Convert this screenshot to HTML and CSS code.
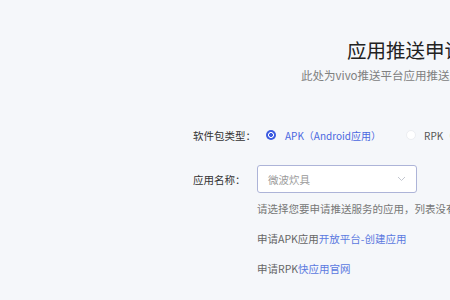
FILE: index.html
```html
<!DOCTYPE html>
<html lang="zh">
<head>
<meta charset="utf-8">
<link rel="stylesheet" href="styles.css">
</head>
<body>
<div class="page">
  <h1 class="title">应用推送申请</h1>
  <p class="subtitle">此处为vivo推送平台应用推送服务申请页面</p>
  <div class="form">
    <div class="row row-type">
      <span class="label">软件包类型：</span>
      <label class="radio checked"><span class="dot"></span><span class="rtext">APK（Android应用）</span></label>
      <label class="radio"><span class="dot"></span><span class="rtext">RPK（快应用）</span></label>
    </div>
    <div class="row row-name">
      <span class="label">应用名称：</span>
      <div class="select">
        <span class="value">微波炊具</span>
        <svg class="chev" width="9" height="6" viewBox="0 0 9 6"><path d="M1 1l3.5 3.5L8 1" fill="none" stroke="#c3c7d0" stroke-width="1"/></svg>
      </div>
    </div>
    <div class="field">
      <p class="help">请选择您要申请推送服务的应用，列表没有您的应用？</p>
      <p class="link-line">申请APK应用<a class="link">开放平台-创建应用</a></p>
      <p class="link-line">申请RPK<a class="link">快应用官网</a></p>
    </div>
  </div>
</div>
</body>
</html>
```
FILE: styles.css
```css
html, body {
  margin: 0;
  padding: 0;
  background: #f5f7fa;
  overflow: hidden;
  width: 450px;
  height: 300px;
}
body {
  font-family: "Noto Sans CJK SC", "Noto Sans", sans-serif;
  color: #333;
}
.page {
  padding-top: 38px;
  white-space: nowrap;
}
.title {
  margin: 0 0 0 347px;
  font-size: 19.5px;
  line-height: 24px;
  font-weight: 400;
  color: #222;
}
.subtitle {
  margin: 6px 0 0 301px;
  font-size: 11.5px;
  line-height: 14px;
  color: #808080;
}
.form {
  margin: 43px 0 0 193px;
}
.row {
  display: flex;
  align-items: center;
}
.row-type {
  height: 20px;
}
.label {
  width: 64px;
  flex: none;
  font-size: 10.5px;
  color: #333;
}
.radio {
  display: flex;
  align-items: center;
  font-size: 10px;
  color: #555;
}
.radio + .radio {
  margin-left: 25px;
}
.dot {
  width: 10px;
  height: 10px;
  border-radius: 50%;
  box-sizing: border-box;
  border: 1px solid #eceef2;
  background: #fff;
  margin: 0 9px 0 9px;
}
.radio + .radio .dot {
  margin-left: 0;
  margin-right: 8px;
}
.radio.checked .dot {
  border: none;
  background: radial-gradient(circle, #3d5ce0 0 1.6px, #fff 2.2px 2.6px, #3d5ce0 3.2px);
}
.radio.checked .rtext {
  color: #4a67e0;
}
.row-name {
  margin-top: 20px;
}
.select {
  width: 160px;
  height: 28px;
  box-sizing: border-box;
  border: 1px solid #adb4d8;
  border-radius: 3px;
  display: flex;
  align-items: center;
  justify-content: space-between;
  padding: 0 10px;
  background: #fff;
}
.value {
  font-size: 10.5px;
  color: #9a9a9a;
}
.field {
  margin-left: 64px;
}
.help {
  margin: 8px 0 0;
  font-size: 10.5px;
  line-height: 16px;
  color: #777;
}
.link-line {
  margin: 14px 0 0;
  font-size: 10.5px;
  line-height: 16px;
  color: #666;
}
.link {
  color: #5b79e0;
}
```
